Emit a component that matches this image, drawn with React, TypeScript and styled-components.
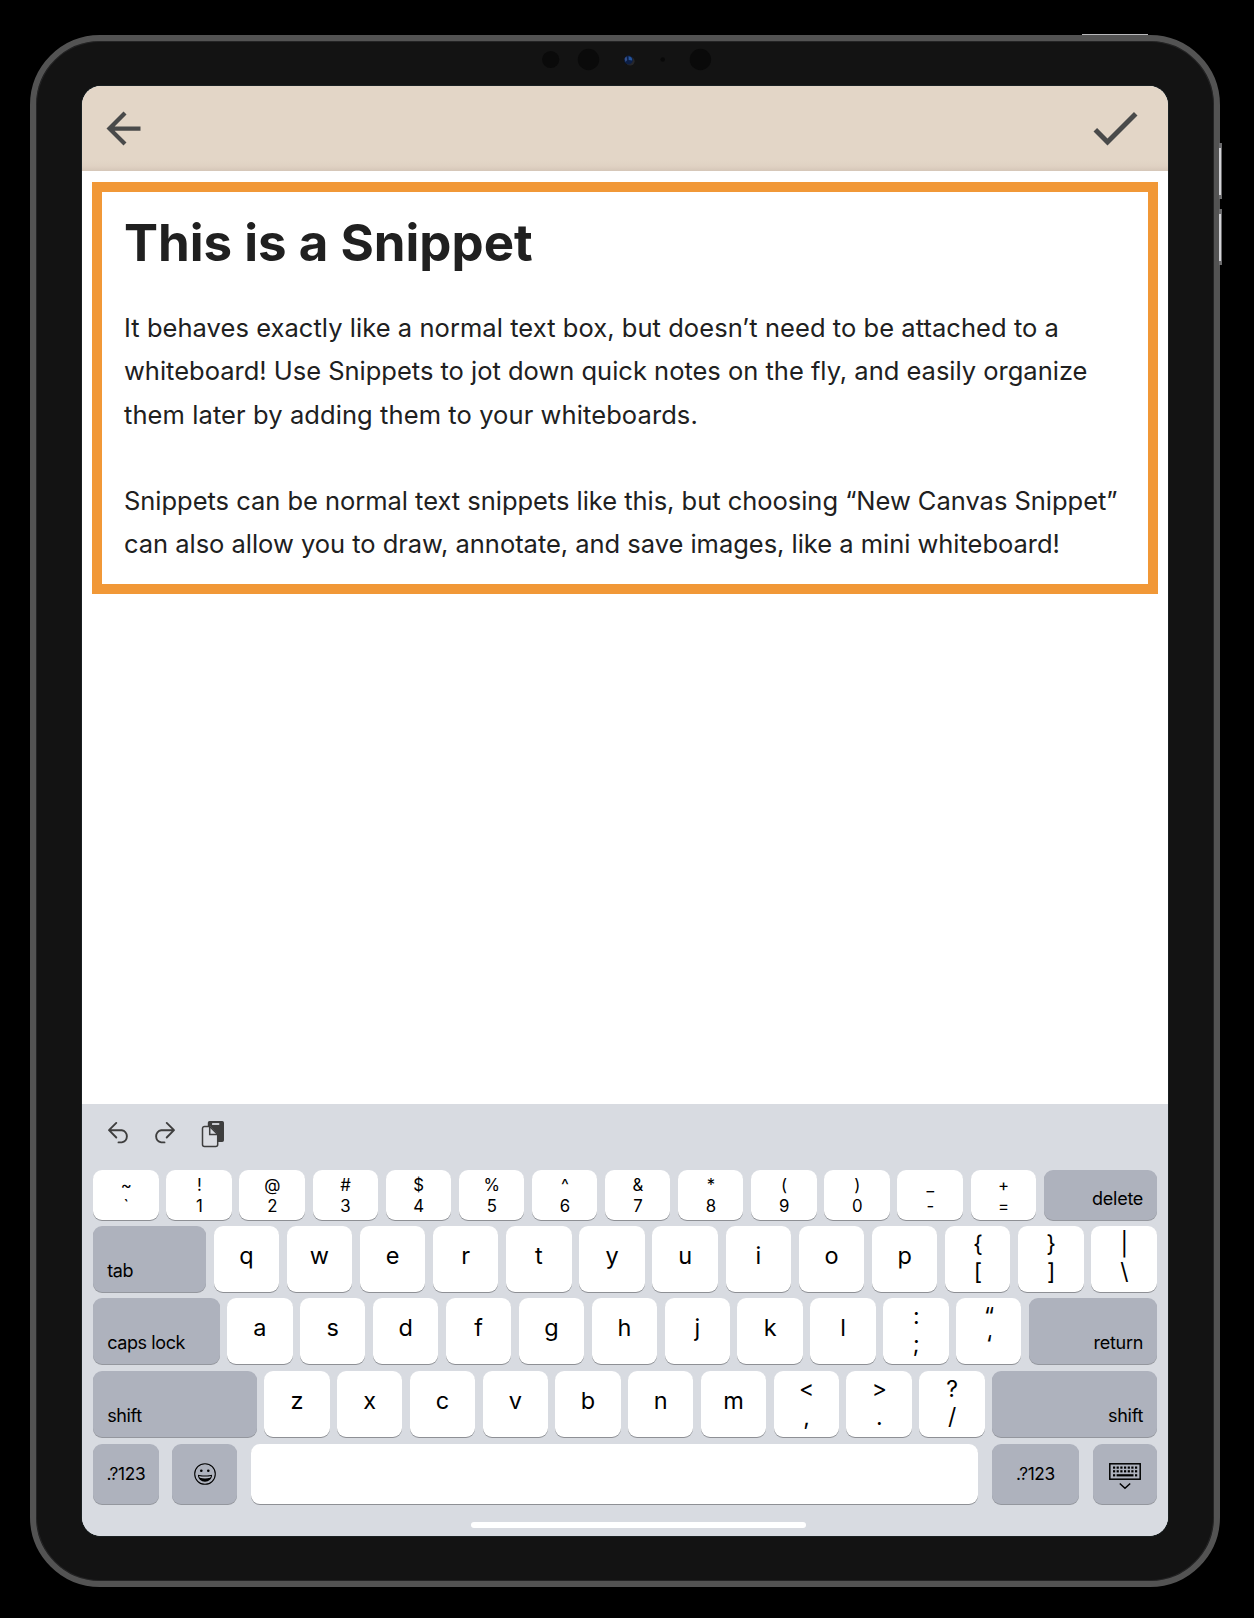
import React from 'react';
import styled, { createGlobalStyle } from 'styled-components';

const GlobalStyle = createGlobalStyle`
  * { box-sizing: border-box; }
  html, body { margin: 0; padding: 0; background: #000; }
  body { font-family: Inter, 'Liberation Sans', sans-serif; overflow: hidden; }
  svg { display: block; flex: none; }
`;

const Page = styled.div`
  width: 1254px;
  height: 1618px;
  padding: 35px 34.5px 31px 30px;
  background: #000;
`;

const Device = styled.div`
  position: relative;
  display: flex;
  flex-direction: column;
  width: 100%;
  height: 100%;
  border: 6px solid #535353;
  border-radius: 70px;
  background: #131313;
  box-shadow: inset 0 0 0 1px #242425;
  padding: 0 45.5px 45px 45.6px;
`;

const SideButton = styled.div<{ $top: number; $height: number }>`
  position: absolute;
  left: 100%;
  margin-left: 5.5px;
  top: ${(p) => p.$top}px;
  width: 3px;
  height: ${(p) => p.$height}px;
  border: solid #6b6b6d;
  border-width: 5px 1px 4px 0;
  background: #d3d3d7;
`;

const PowerButton = styled.div`
  position: absolute;
  top: -7px;
  right: 66px;
  width: 66px;
  height: 1px;
  background: #b9b9bb;
`;

const Bezel = styled.div`
  height: 45px;
  flex: none;
  display: flex;
  align-items: flex-start;
  padding: 7px 0 0 460px;
`;

const Screen = styled.div`
  flex: 1;
  display: flex;
  flex-direction: column;
  border-radius: 19px;
  overflow: hidden;
  background: #fff;
  box-shadow: 0 0 0 1px #1a2022;
`;

const Header = styled.header`
  flex: none;
  height: 85px;
  display: flex;
  align-items: center;
  justify-content: space-between;
  padding: 0 23.4px 0.5px 16.3px;
  background: linear-gradient(#e3d6c7 0, #e3d6c7 74px, #e0d2c3 80px, #d5c6b8 85px);
`;

const Content = styled.main`
  flex: 1;
  padding: 11px 10px 0 10.4px;
`;

const Snippet = styled.article`
  height: 412px;
  border: 10px solid #f19837;
  padding: 19.5px 0 0 22px;
  color: #202020;
  white-space: nowrap;
`;

const Title = styled.h1`
  margin: 0 0 32.5px;
  font-size: 51px;
  line-height: 62px;
  font-weight: 700;
  letter-spacing: 0;
`;

const Paragraph = styled.p`
  margin: 0 0 43px;
  font-size: 25.5px;
  font-weight: 400;
  line-height: 43.3px;
`;

const Line = styled.span<{ $track: number }>`
  display: block;
  letter-spacing: ${(p) => p.$track}px;
`;

const Keyboard = styled.section`
  flex: none;
  height: 432px;
  display: flex;
  flex-direction: column;
  padding: 0 11.3px 0 11.6px;
  background: #d8dbe1;
`;

const Toolbar = styled.div`
  height: 66px;
  flex: none;
  display: flex;
  align-items: flex-start;
  gap: 23.5px;
  padding: 16px 0 0 13px;
`;

const Rows = styled.div`
  display: grid;
  grid-template-rows: 56.2px 72.1px 72.4px 73.6px 60.3px;
`;

const Row = styled.div<{ $height: number }>`
  display: flex;
  justify-content: space-between;
  height: ${(p) => p.$height}px;
`;

const KeyCap = styled.div<{ $width?: number; $dark?: boolean }>`
  flex: none;
  width: ${(p) => p.$width ?? 65.4}px;
  height: 100%;
  display: flex;
  flex-direction: column;
  align-items: center;
  border-radius: 9px;
  color: #000;
  background: ${(p) => (p.$dark ? '#aeb2bd' : '#fff')};
  box-shadow: 0 1px 0.5px ${(p) => (p.$dark ? '#94979e' : '#8e9095')};
`;

const Letter = styled.span`
  font-size: 23.5px;
  line-height: 60.8px;
`;

const Dual = styled.span<{ $small?: boolean }>`
  display: flex;
  flex-direction: column;
  align-items: center;
  font-size: ${(p) => (p.$small ? 16.8 : 23)}px;
  line-height: ${(p) => (p.$small ? 21.3 : 28)}px;
  padding: ${(p) => (p.$small ? 5 : 4)}px 0 0 0.6px;
`;

const Label = styled.span<{ $end?: boolean }>`
  align-self: ${(p) => (p.$end ? 'flex-end' : 'flex-start')};
  margin-top: auto;
  padding: 0 13.5px 10px 14px;
  font-size: 18px;
  line-height: 22px;
  letter-spacing: ${(p) => (p.$end ? -0.25 : -0.4)}px;
`;

const Centered = styled.span`
  margin: auto;
  font-size: 17.3px;
  line-height: 20px;
  letter-spacing: -0.35px;
`;

const HomeIndicator = styled.div`
  width: 335px;
  height: 6px;
  margin: 17.5px auto 0;
  position: relative;
  left: 13.5px;
  border-radius: 3px;
  background: #fff;
`;

const Cameras = () => (
  <svg width="190" height="24" viewBox="0 0 190 24">
    <circle cx="8.7" cy="11.5" r="8.6" fill="#0a0a0a" />
    <circle cx="46.5" cy="11.5" r="10.7" fill="#0a0a0a" />
    <circle cx="88.2" cy="13.2" r="4.4" fill="#27272b" />
    <circle cx="86.5" cy="12" r="4.4" fill="#0d1f45" />
    <path d="M86.5 8.2a4 4 0 0 1 3.6 4.4l-3.4-.6z" fill="#24539a" />
    <path d="M82.6 11a4 4 0 0 1 2-2.6l.6 3.6-1.6 2z" fill="#34508a" />
    <circle cx="120.7" cy="11.5" r="2.2" fill="#090909" />
    <circle cx="158.4" cy="11.5" r="10.7" fill="#0a0a0a" />
  </svg>
);

const BackIcon = () => (
  <svg width="51" height="51" viewBox="0 0 24 24" fill="#494a4a">
    <path d="M20 11H7.83l5.59-5.59L12 4l-8 8 8 8 1.41-1.41L7.83 13H20v-2z" />
  </svg>
);

const DoneIcon = () => (
  <svg width="60" height="60" viewBox="0 0 24 24" fill="#494a4a">
    <path d="M9 16.17 4.83 12l-1.42 1.41L9 19 21 7l-1.41-1.41z" />
  </svg>
);

const UndoIcon = () => (
  <svg width="24" height="24" viewBox="0 0 24 24" fill="none" stroke="#3e3e3e" strokeWidth="1.9" strokeLinecap="round" strokeLinejoin="round">
    <path d="M10.3 2.9 3 10.2l7.3 7.3M3.4 10.2h12.4a6.2 6.2 0 0 1 0 12.2H12.5" />
  </svg>
);

const RedoIcon = () => (
  <svg width="24" height="24" viewBox="1 0 24 24" fill="none" stroke="#3e3e3e" strokeWidth="1.9" strokeLinecap="round" strokeLinejoin="round">
    <path d="m13.7 2.9 7.3 7.3-7.3 7.3M20.6 10.2H8.2a6.2 6.2 0 0 0 0 12.2H11.5" />
  </svg>
);

const PasteIcon = () => (
  <svg width="24" height="28" viewBox="0 0 24 28">
    <path d="M8.5 1h12.7A1.8 1.8 0 0 1 23 2.8v17.4a1.8 1.8 0 0 1-1.8 1.8H17v-7.5L9 6H6.8V2.8A1.8 1.8 0 0 1 8.5 1z" fill="#3e3e3e" />
    <rect x="11" y="3" width="7.3" height="2" rx=".5" fill="#c9cbd0" />
    <path d="M3.5 6.5h5.2l8 8v10a2 2 0 0 1-2 2H3.500a2 2 0 0 1-2-2v-16a2 2 0 0 1 2-2z" fill="#dcdee3" stroke="#3e3e3e" strokeWidth="1.5" />
    <path d="M8.7 6.8v7.7h7.7" fill="none" stroke="#3e3e3e" strokeWidth="1.5" />
  </svg>
);

const IconSlot = styled.span<{ $drop?: number }>`
  margin: auto;
  padding-top: ${(p) => p.$drop ?? 0}px;
`;

const SmileIcon = () => (
  <svg width="24" height="24" viewBox="0 0 24 24">
    <circle cx="12" cy="12" r="10.3" fill="none" stroke="#000" strokeWidth="1.1" />
    <circle cx="8.3" cy="8.7" r="1.3" />
    <circle cx="15.3" cy="8.7" r="1.3" />
    <path d="M4.9 12.8c2.4.9 11.8.9 14.2 0 0 4-3.2 7-7.1 7s-7.1-3-7.1-7z" />
    <path d="M6 13.9c2.8.8 9.2.8 12 0-.2.9-.5 1.3-.9 1.8-2.8.9-7.4.9-10.2 0-.4-.5-.7-.9-.9-1.8z" fill="#b9bcc5" />
  </svg>
);

const DismissIcon = () => (
  <svg width="34" height="30" viewBox="0 0 34 30">
    <rect x="1.8" y="2.8" width="30.4" height="15.4" fill="none" stroke="#000" strokeWidth="1.5" />
    {[6, 9.7].map((y) =>
      [5, 8.6, 12.3, 16, 19.7, 23.3, 27].map((x) => (
        <rect key={`${x}-${y}`} x={x} y={y - 0.5} width="2.2" height="2.2" />
      )),
    )}
    <rect x="5" y="13.2" width="2.2" height="2.2" />
    <rect x="8.6" y="13.2" width="16.9" height="2.2" />
    <rect x="27" y="13.2" width="2.2" height="2.2" />
    <path d="m11.8 22.5 5.2 4.8 5.2-4.8" fill="none" stroke="#000" strokeWidth="1.5" />
  </svg>
);

const DualKey = ({ top, bottom, small }: { top: string; bottom: string; small?: boolean }) => (
  <KeyCap>
    <Dual $small={small}>
      <span>{top}</span>
      <span>{bottom}</span>
    </Dual>
  </KeyCap>
);

const Letters = ({ keys }: { keys: string }) => (
  <>
    {keys.split('').map((k) => (
      <KeyCap key={k}>
        <Letter>{k}</Letter>
      </KeyCap>
    ))}
  </>
);

const WideKey = ({ label, width, end }: { label: string; width: number; end?: boolean }) => (
  <KeyCap $dark $width={width}>
    <Label $end={end}>{label}</Label>
  </KeyCap>
);

const numberKeys = ['~`', '!1', '@2', '#3', '$4', '%5', '^6', '&7', '*8', '(9', ')0', '_-', '+='];

export default function App() {
  return (
    <>
      <GlobalStyle />
      <Page>
        <Device>
          <PowerButton />
          <SideButton $top={101.5} $height={56} />
          <SideButton $top={168} $height={56} />
          <Bezel>
            <Cameras />
          </Bezel>
          <Screen>
            <Header>
              <BackIcon />
              <DoneIcon />
            </Header>
            <Content>
              <Snippet>
                <Title>This is a Snippet</Title>
                <Paragraph>
                  <Line $track={0.052}>
                    It behaves exactly like a normal text box, but doesn’t need to be attached to a
                  </Line>
                  <Line $track={-0.008}>
                    whiteboard! Use Snippets to jot down quick notes on the fly, and easily organize
                  </Line>
                  <Line $track={0.09}>them later by adding them to your whiteboards.</Line>
                </Paragraph>
                <Paragraph>
                  <Line $track={-0.03}>
                    Snippets can be normal text snippets like this, but choosing “New Canvas Snippet”
                  </Line>
                  <Line $track={-0.027}>
                    can also allow you to draw, annotate, and save images, like a mini whiteboard!
                  </Line>
                </Paragraph>
              </Snippet>
            </Content>
            <Keyboard>
              <Toolbar>
                <UndoIcon />
                <RedoIcon />
                <PasteIcon />
              </Toolbar>
              <Rows>
                <Row $height={50.3}>
                  {numberKeys.map((k) => (
                    <DualKey key={k} small top={k[0]} bottom={k[1]} />
                  ))}
                  <WideKey label="delete" width={113} end />
                </Row>
                <Row $height={66}>
                  <WideKey label="tab" width={112.7} />
                  <Letters keys="qwertyuiop" />
                  <DualKey top="{" bottom="[" />
                  <DualKey top="}" bottom="]" />
                  <DualKey top="|" bottom="\" />
                </Row>
                <Row $height={66}>
                  <WideKey label="caps lock" width={126.5} />
                  <Letters keys="asdfghjkl" />
                  <DualKey top=":" bottom=";" />
                  <DualKey top="“" bottom="‘" />
                  <WideKey label="return" width={127.7} end />
                </Row>
                <Row $height={66}>
                  <WideKey label="shift" width={163.7} />
                  <Letters keys="zxcvbnm" />
                  <DualKey top="<" bottom="," />
                  <DualKey top=">" bottom="." />
                  <DualKey top="?" bottom="/" />
                  <WideKey label="shift" width={164.7} end />
                </Row>
                <Row $height={60}>
                  <KeyCap $dark>
                    <Centered>.?123</Centered>
                  </KeyCap>
                  <KeyCap $dark>
                    <IconSlot>
                      <SmileIcon />
                    </IconSlot>
                  </KeyCap>
                  <KeyCap $width={727.6} />
                  <KeyCap $dark $width={87.7}>
                    <Centered>.?123</Centered>
                  </KeyCap>
                  <KeyCap $dark $width={64}>
                    <IconSlot $drop={3}>
                      <DismissIcon />
                    </IconSlot>
                  </KeyCap>
                </Row>
              </Rows>
              <HomeIndicator />
            </Keyboard>
          </Screen>
        </Device>
      </Page>
    </>
  );
}
